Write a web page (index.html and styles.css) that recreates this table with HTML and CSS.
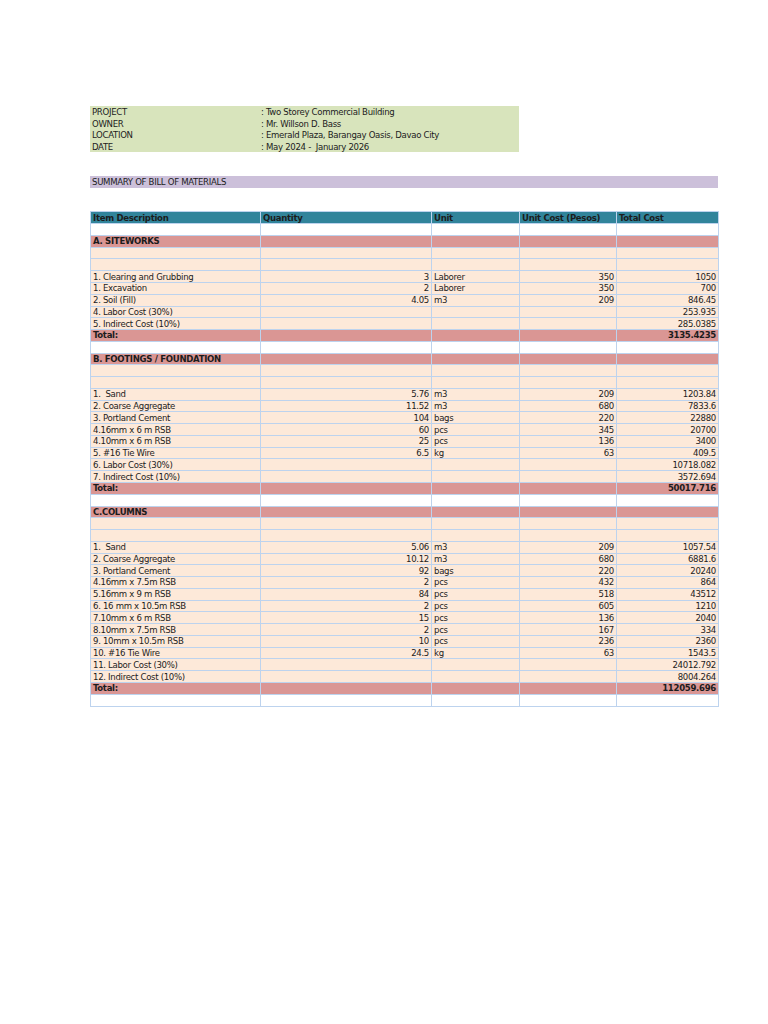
FILE: index.html
```html
<!DOCTYPE html>
<html>
<head>
<meta charset="utf-8">
<link rel="stylesheet" href="styles.css">
</head>
<body>
<div class="page">
  <div class="info">
    <div class="info-row"><span class="lbl">PROJECT</span><span>: Two Storey Commercial Building</span></div>
    <div class="info-row"><span class="lbl">OWNER</span><span>: Mr. Willson D. Bass</span></div>
    <div class="info-row"><span class="lbl">LOCATION</span><span>: Emerald Plaza, Barangay Oasis, Davao City</span></div>
    <div class="info-row"><span class="lbl">DATE</span><span>: May 2024 -&nbsp; January 2026</span></div>
  </div>
  <div class="summary">SUMMARY OF BILL OF MATERIALS</div>
  <table class="bom">
    <colgroup>
      <col class="c1"><col class="c2"><col class="c3"><col class="c4"><col class="c5">
    </colgroup>
    <tr class="head"><td>Item Description</td><td>Quantity</td><td>Unit</td><td>Unit Cost (Pesos)</td><td>Total Cost</td></tr>
    <tr class="blank"><td></td><td></td><td></td><td></td><td></td></tr>
    <tr class="sec"><td>A. SITEWORKS</td><td></td><td></td><td></td><td></td></tr>
    <tr><td></td><td></td><td></td><td></td><td></td></tr>
    <tr><td></td><td></td><td></td><td></td><td></td></tr>
    <tr><td>1. Clearing and Grubbing</td><td class="r">3</td><td>Laborer</td><td class="r">350</td><td class="r">1050</td></tr>
    <tr><td>1. Excavation</td><td class="r">2</td><td>Laborer</td><td class="r">350</td><td class="r">700</td></tr>
    <tr><td>2. Soil (Fill)</td><td class="r">4.05</td><td>m3</td><td class="r">209</td><td class="r">846.45</td></tr>
    <tr><td>4. Labor Cost (30%)</td><td></td><td></td><td></td><td class="r">253.935</td></tr>
    <tr><td>5. Indirect Cost (10%)</td><td></td><td></td><td></td><td class="r">285.0385</td></tr>
    <tr class="sec"><td>Total:</td><td></td><td></td><td></td><td class="r">3135.4235</td></tr>
    <tr class="blank"><td></td><td></td><td></td><td></td><td></td></tr>
    <tr class="sec"><td>B. FOOTINGS / FOUNDATION</td><td></td><td></td><td></td><td></td></tr>
    <tr><td></td><td></td><td></td><td></td><td></td></tr>
    <tr><td></td><td></td><td></td><td></td><td></td></tr>
    <tr><td>1.&nbsp; Sand</td><td class="r">5.76</td><td>m3</td><td class="r">209</td><td class="r">1203.84</td></tr>
    <tr><td>2. Coarse Aggregate</td><td class="r">11.52</td><td>m3</td><td class="r">680</td><td class="r">7833.6</td></tr>
    <tr><td>3. Portland Cement</td><td class="r">104</td><td>bags</td><td class="r">220</td><td class="r">22880</td></tr>
    <tr><td>4.16mm x 6 m RSB</td><td class="r">60</td><td>pcs</td><td class="r">345</td><td class="r">20700</td></tr>
    <tr><td>4.10mm x 6 m RSB</td><td class="r">25</td><td>pcs</td><td class="r">136</td><td class="r">3400</td></tr>
    <tr><td>5. #16 Tie Wire</td><td class="r">6.5</td><td>kg</td><td class="r">63</td><td class="r">409.5</td></tr>
    <tr><td>6. Labor Cost (30%)</td><td></td><td></td><td></td><td class="r">10718.082</td></tr>
    <tr><td>7. Indirect Cost (10%)</td><td></td><td></td><td></td><td class="r">3572.694</td></tr>
    <tr class="sec"><td>Total:</td><td></td><td></td><td></td><td class="r">50017.716</td></tr>
    <tr class="blank"><td></td><td></td><td></td><td></td><td></td></tr>
    <tr class="sec"><td>C.COLUMNS</td><td></td><td></td><td></td><td></td></tr>
    <tr><td></td><td></td><td></td><td></td><td></td></tr>
    <tr><td></td><td></td><td></td><td></td><td></td></tr>
    <tr><td>1.&nbsp; Sand</td><td class="r">5.06</td><td>m3</td><td class="r">209</td><td class="r">1057.54</td></tr>
    <tr><td>2. Coarse Aggregate</td><td class="r">10.12</td><td>m3</td><td class="r">680</td><td class="r">6881.6</td></tr>
    <tr><td>3. Portland Cement</td><td class="r">92</td><td>bags</td><td class="r">220</td><td class="r">20240</td></tr>
    <tr><td>4.16mm x 7.5m RSB</td><td class="r">2</td><td>pcs</td><td class="r">432</td><td class="r">864</td></tr>
    <tr><td>5.16mm x 9 m RSB</td><td class="r">84</td><td>pcs</td><td class="r">518</td><td class="r">43512</td></tr>
    <tr><td>6. 16 mm x 10.5m RSB</td><td class="r">2</td><td>pcs</td><td class="r">605</td><td class="r">1210</td></tr>
    <tr><td>7.10mm x 6 m RSB</td><td class="r">15</td><td>pcs</td><td class="r">136</td><td class="r">2040</td></tr>
    <tr><td>8.10mm x 7.5m RSB</td><td class="r">2</td><td>pcs</td><td class="r">167</td><td class="r">334</td></tr>
    <tr><td>9. 10mm x 10.5m RSB</td><td class="r">10</td><td>pcs</td><td class="r">236</td><td class="r">2360</td></tr>
    <tr><td>10. #16 Tie Wire</td><td class="r">24.5</td><td>kg</td><td class="r">63</td><td class="r">1543.5</td></tr>
    <tr><td>11. Labor Cost (30%)</td><td></td><td></td><td></td><td class="r">24012.792</td></tr>
    <tr><td>12. Indirect Cost (10%)</td><td></td><td></td><td></td><td class="r">8004.264</td></tr>
    <tr class="sec"><td>Total:</td><td></td><td></td><td></td><td class="r">112059.696</td></tr>
    <tr class="blank"><td></td><td></td><td></td><td></td><td></td></tr>
  </table>
</div>
</body>
</html>
```

FILE: styles.css
```css
html, body {
  margin: 0;
  padding: 0;
  background: #ffffff;
}
body {
  font-family: "DejaVu Sans Condensed", "Liberation Sans Narrow", "Liberation Sans", sans-serif;
  font-size: 9.5px;
  letter-spacing: -0.3px;
  color: #1c1c1c;
}
.page {
  padding: 106px 50px 0 90px;
}
.info {
  width: 429px;
  background: #d8e4bc;
}
.info-row {
  display: flex;
  height: 11.6px;
  line-height: 11.6px;
  padding-left: 2px;
}
.info .lbl {
  width: 169px;
}
.summary {
  margin-top: 24px;
  width: 628px;
  height: 12px;
  line-height: 12px;
  padding-left: 2px;
  box-sizing: border-box;
  background: #ccc0da;
}
.bom {
  margin-top: 23px;
  width: 628px;
  border-collapse: collapse;
  table-layout: fixed;
}
.c1 { width: 170px; }
.c2 { width: 171px; }
.c3 { width: 88px; }
.c4 { width: 97px; }
.c5 { width: 102px; }
.bom tr {
  height: 11.78px;
  background: #fde9d9;
}
.bom td {
  border: 1px solid #bdd3ee;
  padding: 0 2px;
  height: 10.78px;
  line-height: 10px;
  white-space: nowrap;
  overflow: hidden;
  vertical-align: middle;
}
.bom td.r {
  text-align: right;
}
.bom tr.head {
  background: #31849b;
  font-weight: bold;
}
.bom tr.blank {
  background: #ffffff;
}
.bom tr.sec {
  background: #da9694;
  font-weight: bold;
}
```
